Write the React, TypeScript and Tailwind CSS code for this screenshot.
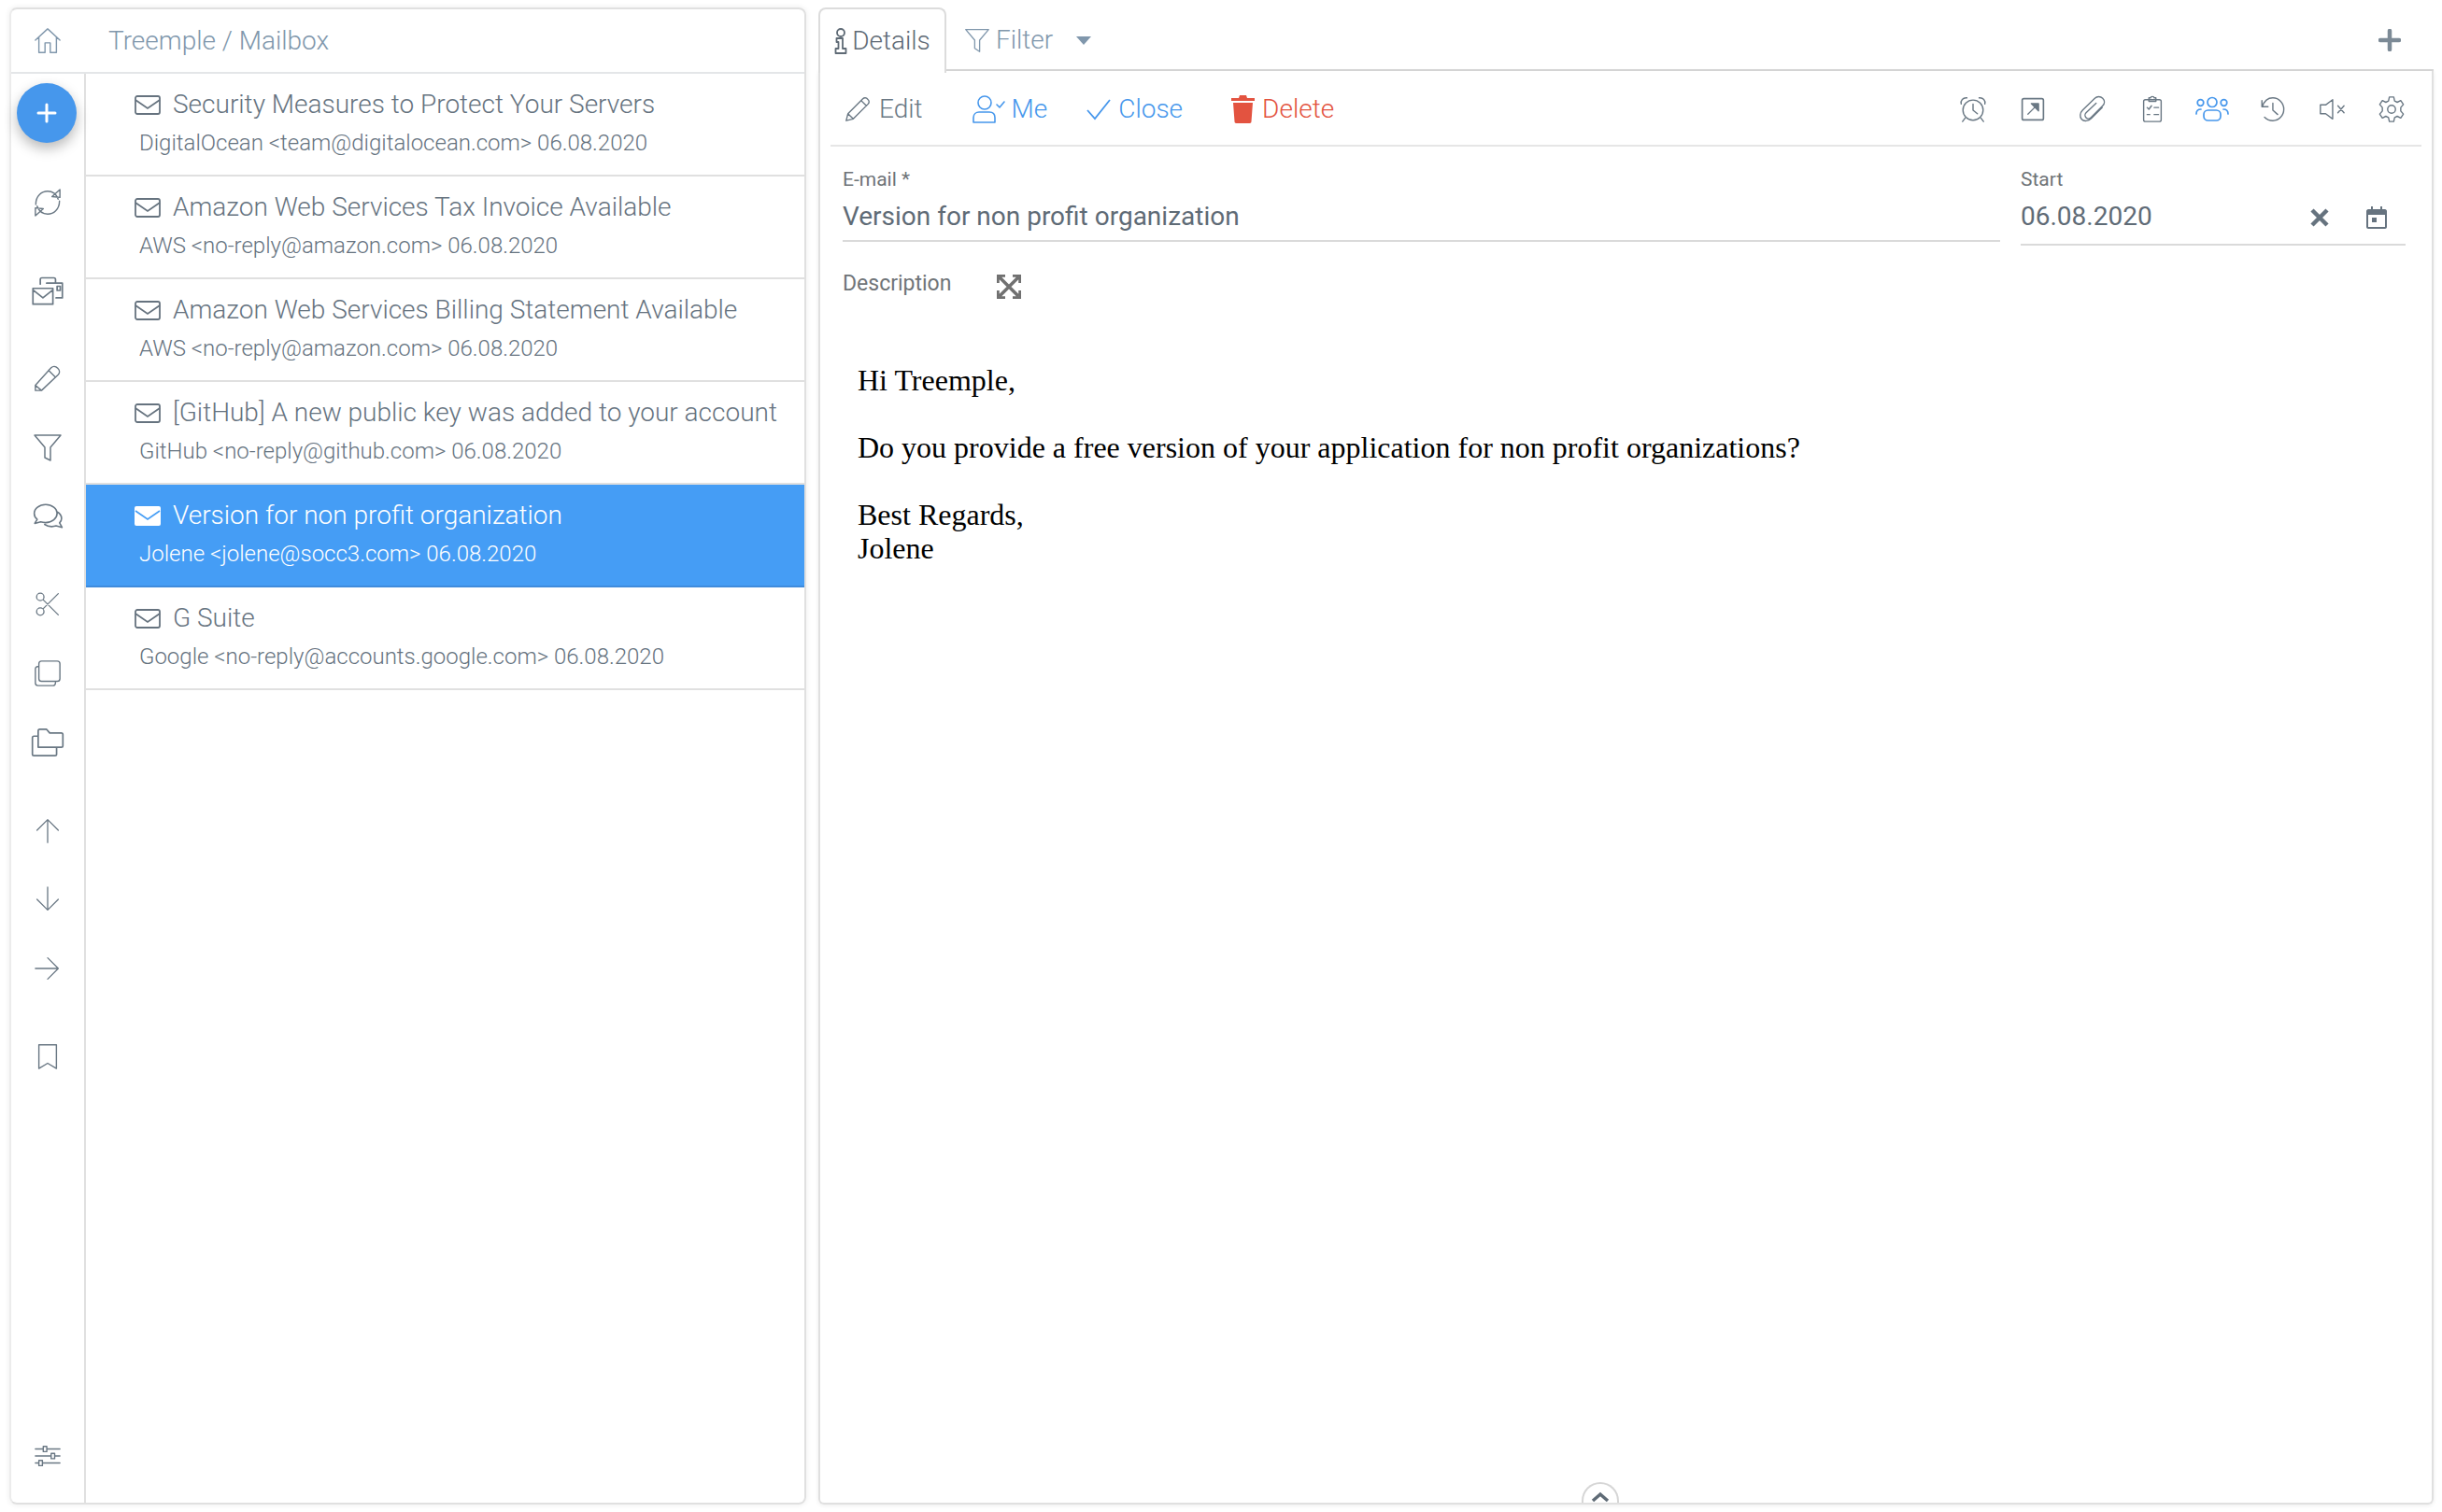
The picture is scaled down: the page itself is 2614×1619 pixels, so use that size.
import type { ReactNode } from 'react';

const rows = [
  { title: 'Security Measures to Protect Your Servers', sub: 'DigitalOcean <team@digitalocean.com> 06.08.2020' },
  { title: 'Amazon Web Services Tax Invoice Available', sub: 'AWS <no-reply@amazon.com> 06.08.2020' },
  { title: 'Amazon Web Services Billing Statement Available', sub: 'AWS <no-reply@amazon.com> 06.08.2020' },
  { title: '[GitHub] A new public key was added to your account', sub: 'GitHub <no-reply@github.com> 06.08.2020' },
  { title: 'Version for non profit organization', sub: 'Jolene <jolene@socc3.com> 06.08.2020', active: true },
  { title: 'G Suite', sub: 'Google <no-reply@accounts.google.com> 06.08.2020' },
];

// thin line icon on a 32 box, same stroke as the app's icon font
function Ico({ children, size = 32, className = '' }: { children: ReactNode; size?: number; className?: string }) {
  return (
    <svg width={size} height={size} viewBox="0 0 32 32" fill="none" stroke="currentColor" strokeWidth="1.5" strokeLinecap="round" strokeLinejoin="round" className={className}>
      {children}
    </svg>
  );
}

// sidebar icons in groups, every slot is 30px high
const sideGroups = [
  [
    { key: 'sync', size: 30, d: 'M28 12C26 6.5 21.5 3 16 3 9.5 3 2.5 8 2.5 18M4 20C6 25.5 10.5 29 16 29 22.5 29 29.5 24 29.5 14M21 9 30 10 30 1ZM11 23 2 22 2 31Z' },
  ],
  [
    { key: 'mail', size: 36, d: 'M2 14H21V29H2ZM2 15.5 11.5 23 21 15.5M9 10V5.5C9 4.5 9.5 4 10.5 4H22C23 4 23.5 4.5 23.5 5.5V8.5M15 9H30V23H24M25 12H28V16H25Z' },
  ],
  [
    { key: 'pencil', size: 30, d: 'M2 24 20 4C22 2 25 2 27.5 4.5 30 7 30 10 28 12L9 30H2ZM2 24 9 30M17 7 25 15' },
    { key: 'filter', size: 32, d: 'M2 3H30L19 16V30L13 27V16Z' },
    { key: 'chat', size: 34, d: 'M14 4C7.5 4 2.5 8 2.5 13 2.5 15.5 3.5 17.5 5.5 19L3 23 9 21.5C10.5 22 12 22.2 14 22.2 20.5 22.2 25.5 18 25.5 13 25.5 8 20.5 4 14 4ZM25 11C28 12.5 30 15 30 18 30 20 29 21.5 28 22.5L30.5 27 24.5 25.5C23 26 21.5 26.2 20 26.2 17.5 26.2 15 25.5 13 24' },
  ],
  [
    { key: 'cut', size: 28, d: 'M11 11 29 29M11 21 29 3M7 2.5A4.5 4.5 0 1 0 7 11.5 4.5 4.5 0 1 0 7 2.5ZM7 20.5A4.5 4.5 0 1 0 7 29.5 4.5 4.5 0 1 0 7 20.5Z' },
    { key: 'copy', size: 30, d: 'M9 2H27C29 2 30 3 30 5V22C30 24 29 25 27 25H9C7 25 6 24 6 22V5C6 3 7 2 9 2ZM6 8C3 8 2 9 2 11V27C2 29 3 30 5 30H22C24 30 25 29 25 26' },
    { key: 'folders', size: 36, d: 'M7 20V5C7 4 7.5 3.5 8.5 3.5H15L18 7H29C30 7 30.5 7.5 30.5 8.5V19C30.5 20 30 20.5 29 20.5H7ZM7 10H3C2 10 1.5 10.5 1.5 11.5V27C1.5 28 2 28.5 3 28.5H23C24 28.5 24.5 28 24.5 27V21' },
  ],
  [
    { key: 'up', size: 28, d: 'M16 31V3M3 16 16 3 29 16' },
    { key: 'down', size: 28, d: 'M16 1V29M3 16 16 29 29 16' },
    { key: 'right', size: 28, d: 'M1 16H29M16 3 29 16 16 29' },
  ],
  [{ key: 'bookmark', size: 30, d: 'M6 3H26V30L16 24 6 30Z' }],
];

export default function App() {
  return (
    <div className="flex h-[1619px] w-[2614px] bg-white pb-[8px] pl-[10px] pr-[9px] pt-[8px] font-['Roboto',sans-serif] font-light">
      {/* left card */}
      <div className="flex w-[853px] flex-col rounded-[8px] border-2 border-[#e0e0e0] border-l-[#ececec] shadow-[0_0_6px_rgba(0,0,0,0.08)]">
        <div className="flex h-[69px] shrink-0 items-center border-b-2 border-[#e4e6e8] text-[#8097ac]">
          <div className="flex w-[78px] justify-center">
            <Ico size={30}>
              <path d="M2 15 16 2 30 15M6 12V29H13V18H19V29H26V12" />
            </Ico>
          </div>
          <span className="ml-[26px] text-[28px]">Treemple / Mailbox</span>
        </div>
        <div className="flex min-h-0 flex-1">
          <div className="relative flex w-[80px] shrink-0 flex-col items-center gap-[64px] border-r-2 border-[#e0e0e0] pt-[123px] text-[#6a7884]">
            <div className="absolute left-[6px] top-[10px] flex h-[64px] w-[64px] items-center justify-center rounded-full bg-[#4697ec] text-white shadow-[0_6px_14px_rgba(0,0,0,0.28)]">
              <svg width="22" height="22" viewBox="0 0 22 22" stroke="currentColor" strokeWidth="3" strokeLinecap="round">
                <path d="M11 2V20M2 11H20" />
              </svg>
            </div>
            {sideGroups.map((g) => (
              <div key={g[0].key} className="flex flex-col items-center gap-[44px]">
                {g.map((i) => (
                  <div key={i.key} className="flex h-[30px] items-center justify-center">
                    <Ico size={i.size} className="shrink-0"><path d={i.d} /></Ico>
                  </div>
                ))}
              </div>
            ))}
            <div className="absolute bottom-[34px] left-[24px]">
              <Ico size={30}>
                <path d="M2 7H11M15 7H30M2 15H20M24 15H30M2 23H6M10 23H30M11 4H15V10H11ZM20 12H24V18H20ZM6 20H10V26H6Z" />
              </Ico>
            </div>
          </div>
          <div className="min-w-0 flex-1">
            {rows.map((r) => (
              <div
                key={r.title}
                className={`h-[110px] border-b-2 pl-[52px] pt-[16px] ${r.active ? 'border-[#3f8bdc] bg-[#459df5] text-white' : 'border-[#e0e0e0] text-[#66737f]'}`}
              >
                <div className="flex h-[34px] items-center">
                  <svg width="28" height="21" viewBox="0 0 28 21" className="shrink-0">
                    {r.active ? (
                      <>
                        <rect x="0" y="0" width="28" height="21" rx="2" fill="#fff" />
                        <path d="M1 5 14 14 27 5" fill="none" stroke="#459df5" strokeWidth="1.6" />
                      </>
                    ) : (
                      <>
                        <rect x="1" y="1" width="26" height="19" rx="2" fill="none" stroke="currentColor" strokeWidth="1.8" />
                        <path d="M1 5 14 14 27 5" fill="none" stroke="currentColor" strokeWidth="1.8" />
                      </>
                    )}
                  </svg>
                  <span className="ml-[13px] whitespace-nowrap text-[28px]">{r.title}</span>
                </div>
                <div className="ml-[5px] mt-[9px] whitespace-nowrap text-[24px] leading-[30px]">{r.sub}</div>
              </div>
            ))}
          </div>
        </div>
      </div>

      {/* right side */}
      <div className="ml-[13px] flex min-w-0 flex-1 flex-col">
        <div className="flex h-[68px] shrink-0 items-end">
          <div className="z-10 -mb-[2px] flex h-[70px] w-[137px] items-center justify-center gap-[5px] rounded-t-[8px] border-2 border-b-0 border-[#dcdcdc] bg-white text-[28px] text-[#5e6a75]">
            <svg width="14" height="28" viewBox="0 0 14 28" fill="none" stroke="currentColor" strokeWidth="1.8">
              <circle cx="7" cy="5" r="4" />
              <path d="M4 11H9V22H12.5V27H1.5V22H4.5V15H2.5V11Z" strokeLinejoin="round" />
            </svg>
            <span>Details</span>
          </div>
          <div className="flex h-[68px] flex-1 items-center border-b-2 border-[#d9d9d9] pt-[3px] text-[#8097ac]">
            <div className="ml-[19px]">
              <Ico size={28}><path d="M2 3H30L19 16V30L13 26V16Z" /></Ico>
            </div>
            <span className="ml-[6px] text-[28px]">Filter</span>
            <svg width="16" height="10" viewBox="0 0 16 10" className="ml-[25px] mt-[3px]"><path d="M0 0H16L8 9Z" fill="currentColor" /></svg>
            <svg width="24" height="24" viewBox="0 0 24 24" stroke="#7c8a96" strokeWidth="4.5" strokeLinecap="round" className="ml-auto mr-[35px]">
              <path d="M12 2V22M2 12H22" />
            </svg>
          </div>
        </div>
        <div className="relative flex min-h-0 flex-1 flex-col rounded-b-[6px] border-2 border-t-0 border-[#e0e0e0] px-[11px] shadow-[0_1px_4px_rgba(0,0,0,0.08)]">
          <div className="flex h-[81px] shrink-0 items-center border-b-2 border-[#e6e6e6] pt-[2px] text-[28px]">
            <div className="ml-[14px] flex items-center gap-[8px] text-[#6a7884]">
              <Ico size={30}><path d="M3 29 5 21 22 4C23.5 2.5 26 2.5 27.5 4.5 29.5 6 29.5 8.5 28 10L11 27ZM5 21 11 27M20 6 26 12" /></Ico>
              <span>Edit</span>
            </div>
            <div className="ml-[52px] flex items-center gap-[7px] text-[#4697ec]">
              <svg width="36" height="32" viewBox="0 0 36 32" fill="none" stroke="currentColor" strokeWidth="1.6" strokeLinejoin="round" strokeLinecap="round">
                <circle cx="14" cy="9" r="7" />
                <path d="M2 30V25C2 21 5 19 8 19H19C23 19 25 21 25 25V30ZM27 11 30 14 35 8" />
              </svg>
              <span>Me</span>
            </div>
            <div className="ml-[42px] flex items-center gap-[8px] text-[#4697ec]">
              <svg width="26" height="26" viewBox="0 0 26 26" fill="none" stroke="currentColor" strokeWidth="1.8"><path d="M1 14 9 23 25 3" /></svg>
              <span>Close</span>
            </div>
            <div className="ml-[52px] flex items-center gap-[8px] text-[#e35340]">
              <svg width="25" height="31" viewBox="0 0 25 31" fill="currentColor">
                <path d="M0 4H8L9 1H16L17 4H25V7H0ZM2 9H23L21.5 29C21.5 30 21 31 19.5 31H5.5C4 31 3.5 30 3.5 29Z" />
              </svg>
              <span>Delete</span>
            </div>
            <div className="ml-auto flex items-center text-[#6a7884]">
              <div className="flex w-[64px] justify-center">
                <Ico size={30}>
                  <circle cx="16" cy="17" r="11.5" />
                  <path d="M16 10V17L21 21M2.5 10C1.5 6 4.5 2.5 9 3M29.5 10C30.5 6 27.5 2.5 23 3M7 26 4 30M25 26 28 30" />
                </Ico>
              </div>
              <div className="flex w-[64px] justify-center">
                <Ico size={28}>
                  <rect x="3" y="3" width="26" height="26" rx="2" strokeWidth="1.9" />
                  <path d="M10 22 21 11" />
                  <path d="M14 9H23V18Z" fill="currentColor" />
                </Ico>
              </div>
              <div className="flex w-[64px] justify-center">
                <Ico size={30}><path d="M27 14 14.5 26.5C11 30 6 30 3.5 27.5 1 25 1.5 20 4.5 17L18.5 3.5C21 1 25 1 27.5 3.5 30 6 30 9.5 27.5 12L14 25.5C12.5 27 10 27 8.5 25.5 7 24 7 21.5 8.5 20L20 9" /></Ico>
              </div>
              <div className="flex w-[64px] justify-center">
                <Ico size={30}>
                  <rect x="6" y="5" width="20" height="25" rx="2" />
                  <path d="M12 5V3H14C14 1 18 1 18 3H20V7H12ZM10 14 12 16 15 12M18 14H23M10 22H13M18 22H23" />
                </Ico>
              </div>
              <div className="flex w-[64px] justify-center">
                <svg width="36" height="28" viewBox="0 0 36 28" fill="none" stroke="#4697ec" strokeWidth="1.7" strokeLinecap="round">
                  <circle cx="18" cy="6.5" r="5" />
                  <circle cx="5.5" cy="7" r="3.3" />
                  <circle cx="30.5" cy="7" r="3.3" />
                  <rect x="9" y="15" width="18" height="11" rx="4.5" />
                  <path d="M1 19C1 15.5 3 14 6 14M35 19C35 15.5 33 14 30 14" />
                </svg>
              </div>
              <div className="flex w-[64px] justify-center">
                <Ico size={30}>
                  <path d="M4.5 6V13H11.5M5 13C7 7 11 3 17 3 24 3 29.5 9 29.5 16 29.5 23 24 29 17 29 13 29 10 27.5 7.5 25M17 9V17L22.5 22" />
                </Ico>
              </div>
              <div className="flex w-[64px] justify-center">
                <Ico size={30}><path d="M3 11H9L17 5V27L9 21H3ZM23 12 30 20M30 12 23 20" /></Ico>
              </div>
              <div className="flex w-[64px] justify-center">
                <Ico size={30}>
                  <circle cx="16" cy="16" r="4.5" />
                  <path d="M13.5 2H18.5L19.5 6.5 22.5 8 26.5 6 29.5 10.5 26.5 14 26.5 18 29.5 21.5 26.5 26 22.5 24 19.5 25.5 18.5 30H13.5L12.5 25.5 9.5 24 5.5 26 2.5 21.5 5.5 18V14L2.5 10.5 5.5 6 9.5 8 12.5 6.5Z" />
                </Ico>
              </div>
            </div>
          </div>
          <div className="flex shrink-0 pl-[13px] pr-[17px] pt-[23px]">
            <div className="flex-1">
              <div className="text-[21px] leading-[24px] font-normal text-[#6f7478]">E-mail *</div>
              <div className="h-[55px] border-b-2 border-[#dadada] pt-[12px] text-[28px] leading-[32px] font-normal text-[#5f6b76]">Version for non profit organization</div>
            </div>
            <div className="ml-[22px] w-[412px]">
              <div className="text-[21px] leading-[24px] font-normal text-[#6f7478]">Start</div>
              <div className="flex h-[59px] items-start border-b-2 border-[#dadada] pt-[12px] text-[28px] leading-[32px] font-normal text-[#5f6b76]">
                06.08.2020
                <svg width="20" height="20" viewBox="0 0 20 20" stroke="#66737f" strokeWidth="4.5" className="ml-auto mt-[7px]"><path d="M2 2 18 18M18 2 2 18" /></svg>
                <svg width="22" height="24" viewBox="0 0 22 24" className="ml-[40px] mr-[20px] mt-[5px]" fill="#66737f">
                  <path d="M2 3H5V0H7V3H15V0H17V3H20C21 3 22 4 22 5V22C22 23 21 24 20 24H2C1 24 0 23 0 22V5C0 4 1 3 2 3ZM2 9V22H20V9ZM6 12H11V17H6Z" fillRule="evenodd" />
                </svg>
              </div>
            </div>
          </div>
          <div className="flex h-[82px] shrink-0 items-center pl-[13px] text-[23px] font-normal text-[#6f7478]">
            <span>Description</span>
            <svg width="26" height="26" viewBox="0 0 26 26" className="ml-[49px] mt-[6px]" fill="none" stroke="#707070" strokeWidth="3.5">
              <path d="M1 9V1H9M17 1H25V9M25 17V25H17M9 25H1V17M3 3 23 23M23 3 3 23" />
            </svg>
          </div>
          <div className="pl-[29px] pt-[44px] font-['Liberation_Serif',serif] text-[32px] leading-[36px] font-normal text-black">
            <p>Hi Treemple,</p>
            <p className="mt-[36px]">Do you provide a free version of your application for non profit organizations?</p>
            <p className="mt-[36px]">Best Regards,</p>
            <p>Jolene</p>
          </div>
          <div className="absolute bottom-0 left-[815px] flex h-[22px] w-[40px] items-start justify-center overflow-hidden rounded-t-full border-2 border-b-0 border-[#d6d6d6] bg-white pt-[8px]">
            <svg width="20" height="12" viewBox="0 0 20 12" fill="none" stroke="#5f6b76" strokeWidth="3.5"><path d="M2 10 10 3 18 10" /></svg>
          </div>
        </div>
      </div>
    </div>
  );
}
